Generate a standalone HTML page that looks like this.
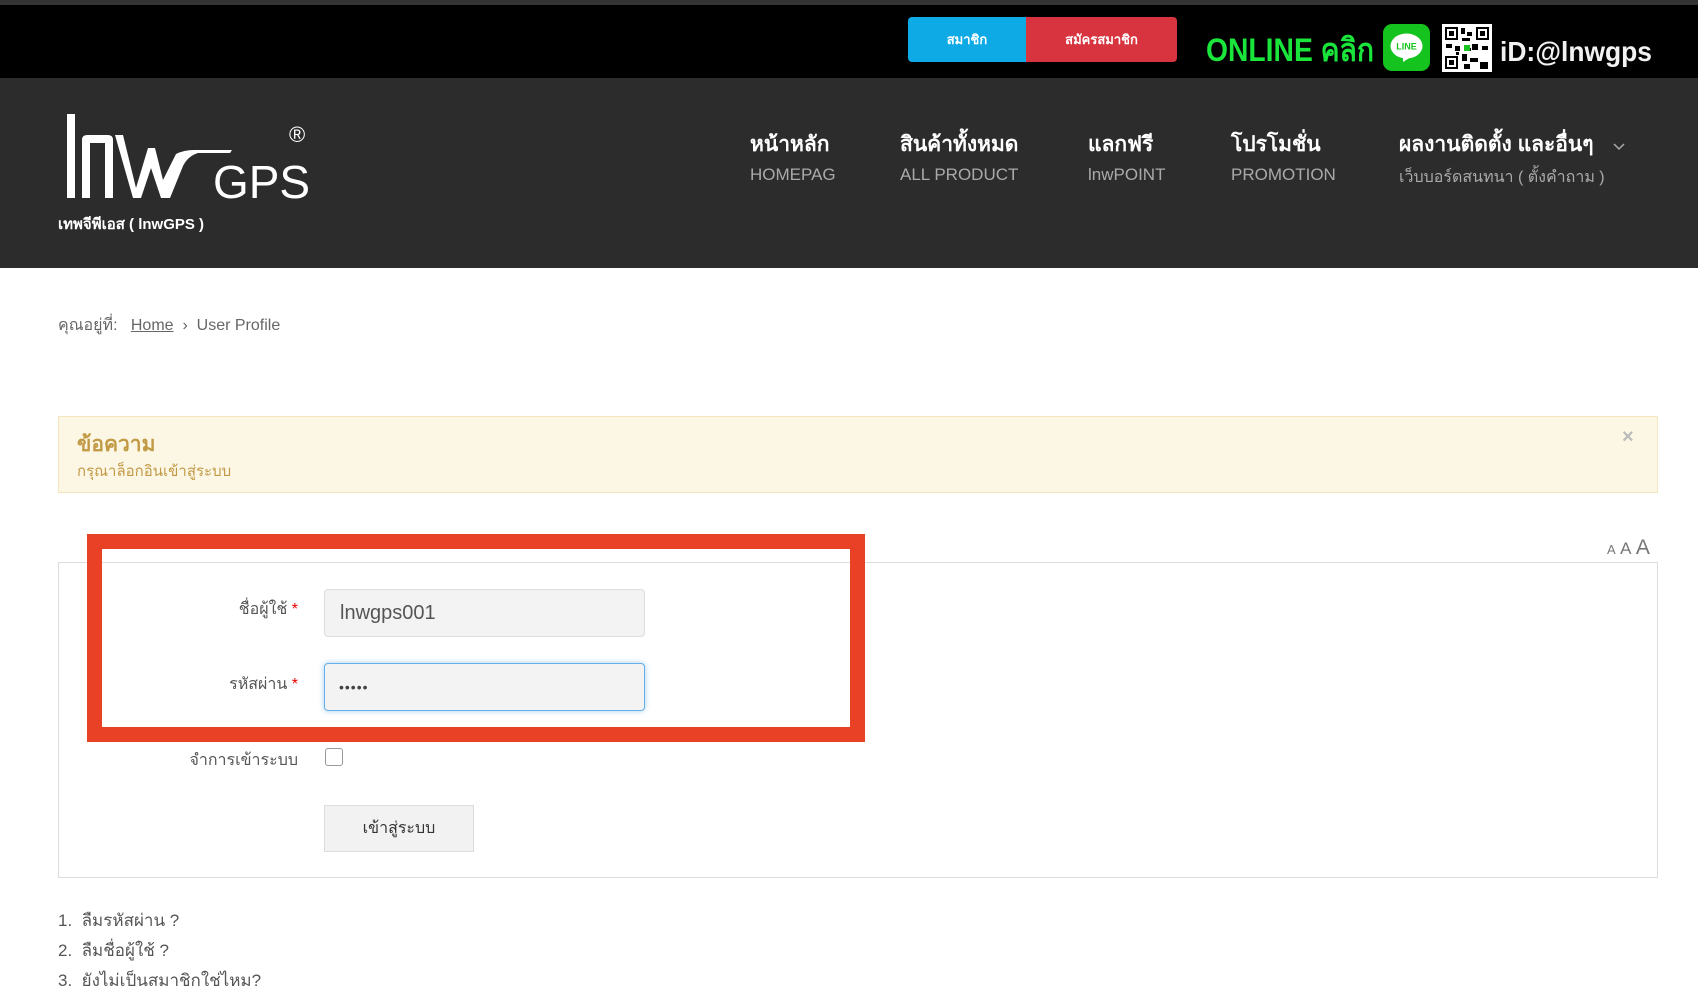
<!DOCTYPE html>
<html><head><meta charset="utf-8">
<style>
*{margin:0;padding:0;box-sizing:border-box}
body{width:1698px;height:1003px;overflow:hidden;background:#fff;font-family:"Liberation Sans","Noto Sans CJK SC",sans-serif;position:relative;color:#555}
.abs{position:absolute}
</style></head><body>
<div class="abs" style="left:0;top:0;width:1698px;height:5px;background:#333"></div>
<div class="abs" style="left:0;top:5px;width:1698px;height:73px;background:#000"></div>
<div class="abs" style="left:908px;top:17px;width:118px;height:45px;background:#0eaae6;border-radius:4px 0 0 4px;color:#fff;font-size:13px;font-weight:bold;text-align:center;line-height:45px">สมาชิก</div>
<div class="abs" style="left:1026px;top:17px;width:151px;height:45px;background:#d8343f;border-radius:0 4px 4px 0;color:#fff;font-size:13px;font-weight:bold;text-align:center;line-height:45px">สมัครสมาชิก</div>
<svg class="abs" style="left:1205px;top:26px" width="172" height="44"><text x="1" y="35" font-size="32" font-weight="bold" fill="#19e53a" font-family="Liberation Sans,Noto Sans CJK SC,sans-serif" textLength="168" lengthAdjust="spacingAndGlyphs">ONLINE คลิก</text></svg>
<div class="abs" style="left:1383px;top:24px;width:47px;height:47px;background:#14c31e;border-radius:9px">
<svg width="47" height="47"><ellipse cx="23.5" cy="22" rx="16" ry="12.5" fill="#fff"/><path d="M20 32 L28 33 L20 38 Z" fill="#fff"/><text x="23.5" y="25.5" font-size="9" font-weight="bold" fill="#14c31e" text-anchor="middle" font-family="Liberation Sans">LINE</text></svg></div>
<div class="abs" style="left:1442px;top:24px;width:50px;height:48px;background:#fff">
<svg width="50" height="48"><g fill="#000"><rect x="3" y="3" width="13" height="13"/><rect x="34" y="3" width="13" height="13"/><rect x="3" y="32" width="13" height="13"/></g><g fill="#fff"><rect x="5" y="5" width="9" height="9"/><rect x="36" y="5" width="9" height="9"/><rect x="5" y="34" width="9" height="9"/></g><g fill="#000"><rect x="7" y="7" width="5" height="5"/><rect x="38" y="7" width="5" height="5"/><rect x="7" y="36" width="5" height="5"/><rect x="19" y="4" width="4" height="6"/><rect x="25" y="8" width="5" height="4"/><rect x="20" y="14" width="8" height="3"/><rect x="4" y="20" width="6" height="4"/><rect x="13" y="22" width="5" height="5"/><rect x="30" y="20" width="6" height="6"/><rect x="40" y="22" width="6" height="4"/><rect x="20" y="30" width="5" height="7"/><rect x="28" y="34" width="8" height="4"/><rect x="38" y="38" width="8" height="7"/><rect x="22" y="40" width="6" height="5"/><rect x="26" y="24" width="3" height="3"/><rect x="14" y="28" width="3" height="3"/></g><rect x="22" y="21" width="6" height="6" fill="#19c31e"/></svg></div>
<svg class="abs" style="left:1499px;top:30px" width="160" height="42"><text x="1" y="31" font-size="28" font-weight="bold" fill="#f2f2f2" font-family="Liberation Sans" textLength="152" lengthAdjust="spacingAndGlyphs">iD:@lnwgps</text></svg>

<div class="abs" style="left:0;top:78px;width:1698px;height:190px;background:#2c2c2c"></div>
<svg class="abs" style="left:60px;top:110px" width="270" height="100">
<rect x="7" y="4" width="8" height="84" fill="#fff"/>
<path d="M22 88 V30 Q22 25 27 25 H48 Q53 25 53 30 V88 H45 V33 H30 V88 Z" fill="#fff"/>
<path d="M55 25 H63 L76 78 L88 38 H95 L103 70 L116 44 Q124 40 134 40 H172 L170 43 H138 Q128 46 123 56 L110 88 H101 L91 58 L81 88 H73 Z" fill="#fff"/>
<text x="153" y="88" font-size="46" fill="#fff" font-family="Liberation Sans" textLength="97" lengthAdjust="spacingAndGlyphs">GPS</text>
<text x="229" y="32" font-size="22" fill="#fff" font-family="Liberation Sans">®</text>
</svg>
<div class="abs" style="left:58px;top:212px;color:#fff;font-size:15px;font-weight:bold">เทพจีพีเอส ( lnwGPS )</div>

<div class="abs" style="left:750px;top:128px;color:#fff;font-size:21px;font-weight:bold">หน้าหลัก</div>
<div class="abs" style="left:750px;top:165px;color:#aaa;font-size:17px">HOMEPAG</div>
<div class="abs" style="left:900px;top:128px;color:#fff;font-size:21px;font-weight:bold">สินค้าทั้งหมด</div>
<div class="abs" style="left:900px;top:165px;color:#aaa;font-size:17px">ALL PRODUCT</div>
<div class="abs" style="left:1088px;top:128px;color:#fff;font-size:21px;font-weight:bold">แลกฟรี</div>
<div class="abs" style="left:1088px;top:165px;color:#aaa;font-size:17px">lnwPOINT</div>
<div class="abs" style="left:1231px;top:128px;color:#fff;font-size:21px;font-weight:bold">โปรโมชั่น</div>
<div class="abs" style="left:1231px;top:165px;color:#aaa;font-size:17px">PROMOTION</div>
<div class="abs" style="left:1399px;top:128px;color:#fff;font-size:21px;font-weight:bold">ผลงานติดตั้ง และอื่นๆ</div>
<div class="abs" style="left:1399px;top:165px;color:#aaa;font-size:16px">เว็บบอร์ดสนทนา ( ตั้งคำถาม )</div>
<svg class="abs" style="left:1612px;top:142px" width="14" height="10"><path d="M2 2 L7 7 L12 2" stroke="#aaa" stroke-width="1.5" fill="none"/></svg>

<div class="abs" style="left:58px;top:313px;font-size:16px;color:#666">คุณอยู่ที่: &nbsp; <span style="text-decoration:underline;color:#666">Home</span> &nbsp;›&nbsp; User Profile</div>

<div class="abs" style="left:58px;top:416px;width:1600px;height:77px;background:#fcf7e5;border:1px solid #f5e6c0"></div>
<div class="abs" style="left:77px;top:428px;color:#c29a45;font-size:21px;font-weight:bold">ข้อความ</div>
<div class="abs" style="left:77px;top:459px;color:#c29a45;font-size:15px">กรุณาล็อกอินเข้าสู่ระบบ</div>
<div class="abs" style="left:1622px;top:426px;color:#bbb;font-size:20px;font-weight:bold">×</div>

<div class="abs" style="left:1607px;top:536px;color:#777;font-family:'Liberation Sans';white-space:nowrap"><span style="font-size:13px">A</span> <span style="font-size:17px">A</span> <span style="font-size:21px">A</span></div>

<div class="abs" style="left:58px;top:562px;width:1600px;height:316px;border:1px solid #ddd"></div>
<div class="abs" style="left:87px;top:534px;width:778px;height:208px;border:15px solid #e84126"></div>

<div class="abs" style="left:180px;top:597px;width:118px;text-align:right;font-size:16px;color:#555">ชื่อผู้ใช้ <span style="color:#e00">*</span></div>
<div class="abs" style="left:324px;top:589px;width:321px;height:48px;background:#f3f3f3;border:1px solid #ddd;border-radius:4px;font-size:20px;color:#555;padding-left:15px;line-height:46px">lnwgps001</div>
<div class="abs" style="left:180px;top:672px;width:118px;text-align:right;font-size:16px;color:#555">รหัสผ่าน <span style="color:#e00">*</span></div>
<div class="abs" style="left:324px;top:663px;width:321px;height:48px;background:#f3f3f3;border:1px solid #66afe9;box-shadow:0 0 6px rgba(102,175,233,.6);border-radius:4px;font-size:14px;color:#444;padding-left:14px;line-height:46px;letter-spacing:1px">•••••</div>

<div class="abs" style="left:150px;top:748px;width:148px;text-align:right;font-size:16px;color:#555">จำการเข้าระบบ</div>
<div class="abs" style="left:325px;top:748px;width:18px;height:18px;border:1px solid #999;border-radius:3px;background:#fff"></div>

<div class="abs" style="left:324px;top:805px;width:150px;height:47px;background:#f2f2f2;border:1px solid #ddd;text-align:center;line-height:45px;font-size:16px;color:#333">เข้าสู่ระบบ</div>

<div class="abs" style="left:58px;top:906px;font-size:17px;color:#555;line-height:30px">1.&nbsp; ลืมรหัสผ่าน ?<br>2.&nbsp; ลืมชื่อผู้ใช้ ?<br>3.&nbsp; ยังไม่เป็นสมาชิกใช่ไหม?</div>
</body></html>
